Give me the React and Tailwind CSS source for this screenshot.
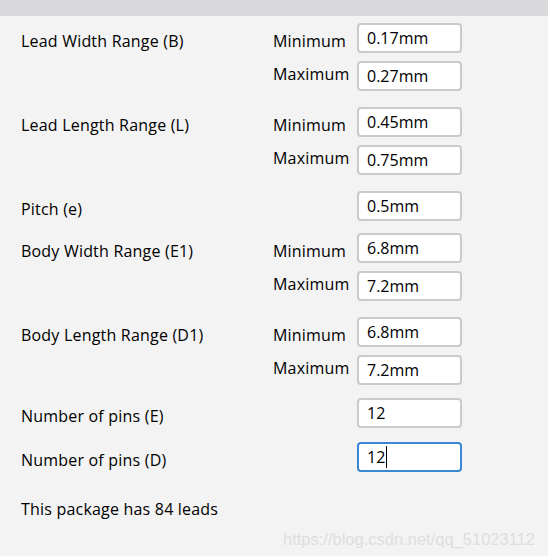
import React from "react";

// parameter groups, margins tuned per group to match the dialog spacing
const groups = [
  { label: "Lead Width Range (B)", mt: "mt-[7px]", rows: [["Minimum", "0.17mm"], ["Maximum", "0.27mm"]] },
  { label: "Lead Length Range (L)", mt: "mt-[16px]", rows: [["Minimum", "0.45mm"], ["Maximum", "0.75mm"]] },
  { label: "Pitch (e)", mt: "mt-[16px]", rows: [["", "0.5mm"]] },
  { label: "Body Width Range (E1)", mt: "mt-[12px]", rows: [["Minimum", "6.8mm"], ["Maximum", "7.2mm"]] },
  { label: "Body Length Range (D1)", mt: "mt-[16px]", rows: [["Minimum", "6.8mm"], ["Maximum", "7.2mm"]] },
  { label: "Number of pins (E)", mt: "mt-[13px]", rows: [["", "12"]] },
  { label: "Number of pins (D)", mt: "mt-[14px]", rows: [["", "12"]], focused: true },
];

const Field = ({ value, focused }) => (
  <div
    className={
      focused
        ? "flex h-[30px] w-[105px] items-center rounded-[4px] border-2 border-[#3c87d4] bg-white pl-[8px] pb-[1px]"
        : "flex h-[30px] w-[105px] items-center rounded-[4px] border-2 border-[#cacaca] bg-white pl-[8px] pb-[1px]"
    }
  >
    <span className="text-[16px] leading-none">{value}</span>
    {focused && <span className="ml-[1px] h-[22px] w-px bg-black" />}
  </div>
);

export default function App() {
  return (
    <div
      className="relative h-[556px] w-[548px] overflow-hidden bg-[#f3f3f3] text-[#000]"
      style={{ fontFamily: '"Open Sans", "Noto Sans", sans-serif' }}
    >
      <div className="h-[16px] bg-[#d9d9db]" />

      <div className="px-[21px]">
        {groups.map((g) => (
          <div key={g.label} className={`${g.mt} flex flex-col gap-[8px]`}>
            {g.rows.map(([sub, value], i) => {
              // first row labels sit a bit low, the "Maximum" row a bit high
              const shift = i === 0 ? "pt-[6px]" : "pb-[5px]";
              return (
                <div key={i} className="flex h-[30px] items-center">
                  <span className={`w-[252px] ${shift} text-[16px] leading-none tracking-[0.2px]`}>
                    {i === 0 ? g.label : ""}
                  </span>
                  <span className={`w-[84px] ${shift} text-[16px] leading-none tracking-[0.2px]`}>{sub}</span>
                  <Field value={value} focused={g.focused} />
                </div>
              );
            })}
          </div>
        ))}

        <p className="mt-[26px] text-[16px] leading-[22px] tracking-[0.2px]">This package has 84 leads</p>
      </div>

      {/* csdn watermark */}
      <span
        className="absolute left-[283px] top-[531px] text-[16.5px] leading-none text-[#dedede]"
        style={{ fontFamily: '"Liberation Sans", Arial, sans-serif' }}
      >
        https://blog.csdn.net/qq_51023112
      </span>
    </div>
  );
}
